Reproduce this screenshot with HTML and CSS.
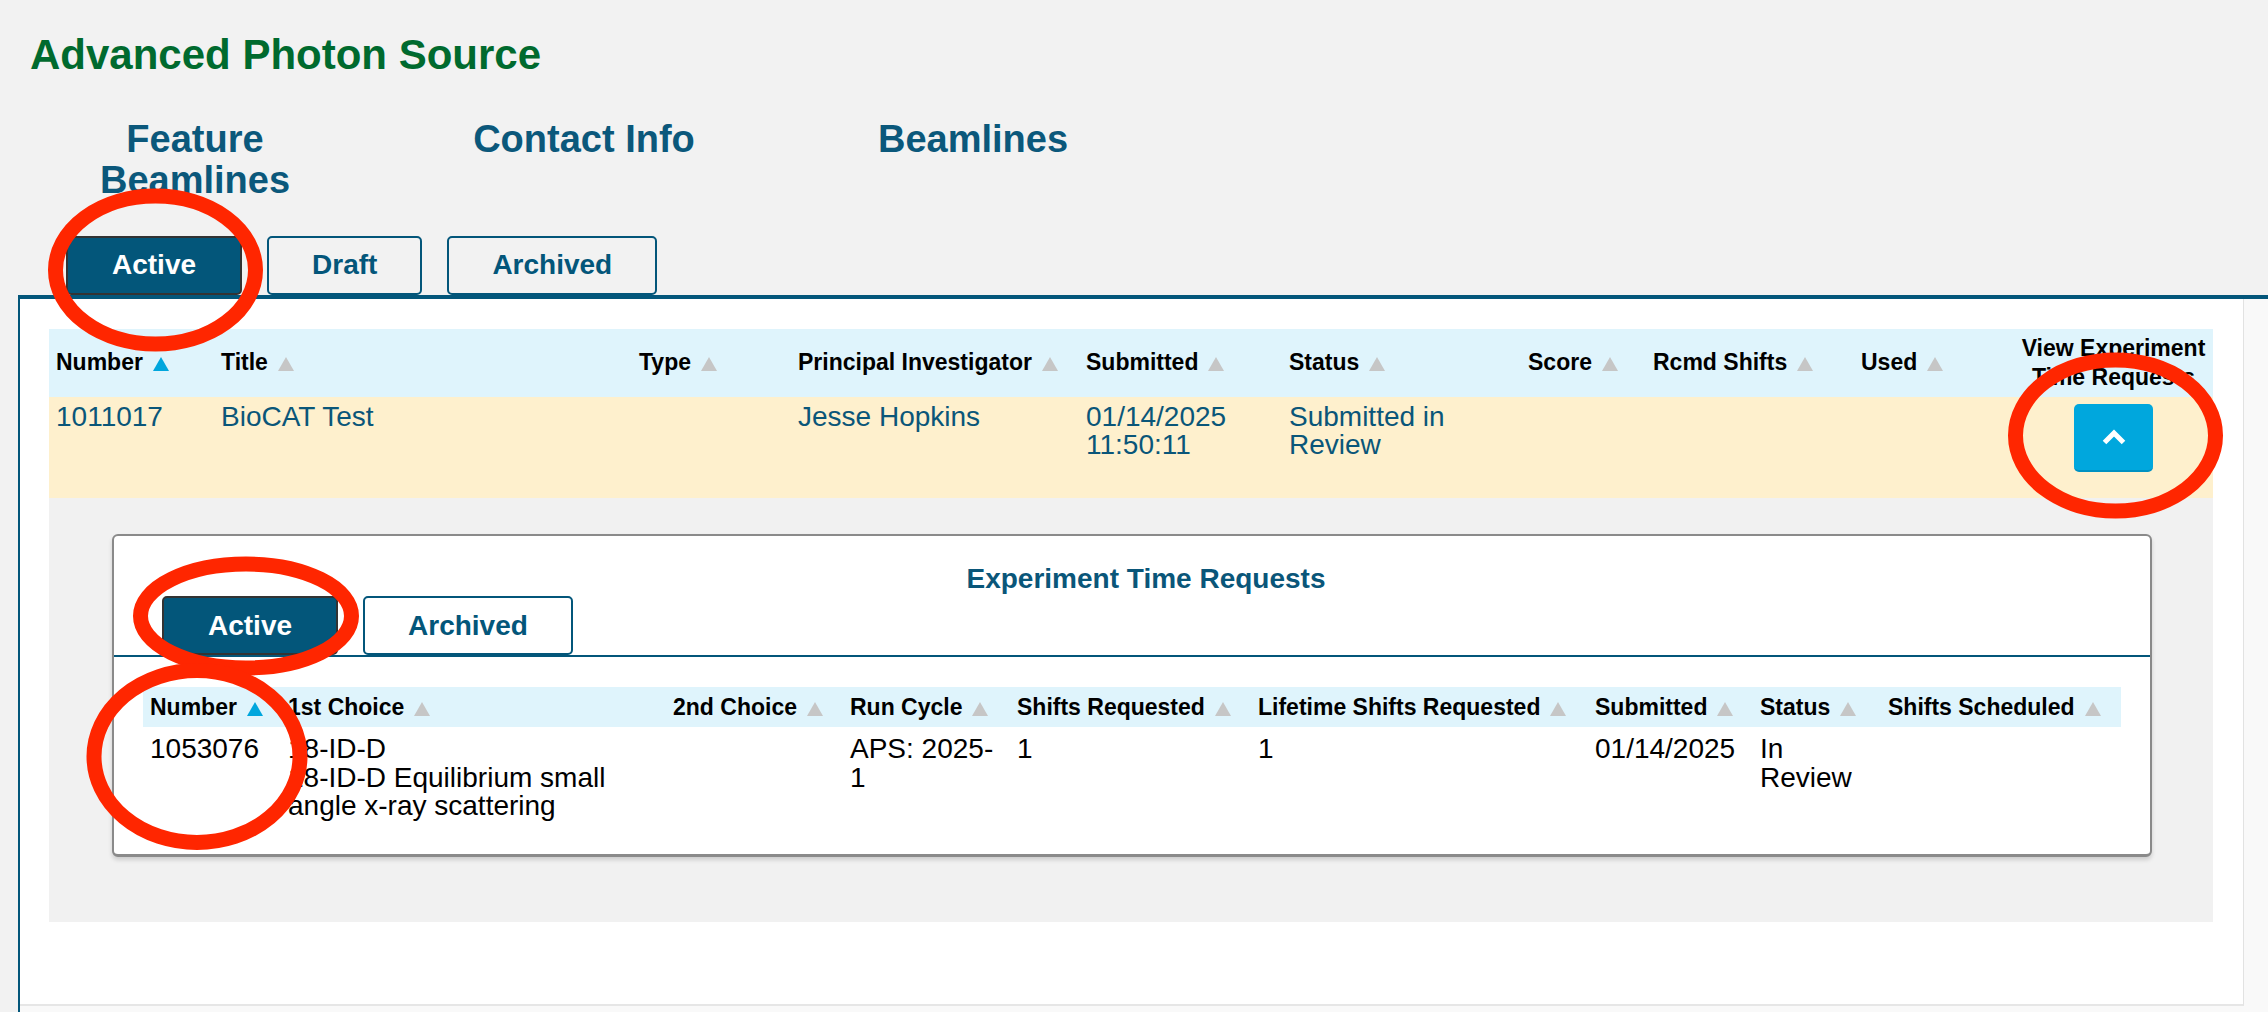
FILE: index.html
```html
<!DOCTYPE html>
<html lang="en">
<head>
<meta charset="utf-8">
<title>Advanced Photon Source</title>
<link rel="stylesheet" href="styles.css">
</head>
<body>
<h1 class="site-title">Advanced Photon Source</h1>
<nav class="nav">
  <a class="nav-link" href="#">Feature Beamlines</a>
  <a class="nav-link" href="#">Contact Info</a>
  <a class="nav-link" href="#">Beamlines</a>
</nav>
<div class="tabs tabs-outer">
  <div class="tab tab-active">Active</div>
  <div class="tab">Draft</div>
  <div class="tab">Archived</div>
</div>
<div class="workspace">
  <div class="panel">
    <table class="grid main-grid">
      <colgroup>
        <col style="width:165px"><col style="width:418px"><col style="width:159px"><col style="width:288px"><col style="width:203px"><col style="width:239px"><col style="width:125px"><col style="width:208px"><col style="width:160px"><col style="width:199px">
      </colgroup>
      <thead>
        <tr>
          <th>Number<span class="sort sort-on"></span></th>
          <th>Title<span class="sort"></span></th>
          <th>Type<span class="sort"></span></th>
          <th>Principal Investigator<span class="sort"></span></th>
          <th>Submitted<span class="sort"></span></th>
          <th>Status<span class="sort"></span></th>
          <th>Score<span class="sort"></span></th>
          <th>Rcmd Shifts<span class="sort"></span></th>
          <th>Used<span class="sort"></span></th>
          <th class="th-center">View Experiment<br>Time Requests</th>
        </tr>
      </thead>
      <tbody>
        <tr class="row-hl">
          <td>1011017</td>
          <td>BioCAT Test</td>
          <td></td>
          <td>Jesse Hopkins</td>
          <td>01/14/2025 11:50:11</td>
          <td>Submitted in Review</td>
          <td></td>
          <td></td>
          <td></td>
          <td class="td-button">
            <button class="toggle" type="button" aria-label="Collapse">
              <svg width="26" height="18" viewBox="0 0 26 18"><polyline points="3.5,14.5 13,5 22.5,14.5" fill="none" stroke="#fff" stroke-width="5"/></svg>
            </button>
          </td>
        </tr>
        <tr class="row-detail">
          <td colspan="10">
            <div class="card">
              <div class="card-title">Experiment Time Requests</div>
              <div class="tabs tabs-inner">
                <div class="tab tab-active">Active</div>
                <div class="tab">Archived</div>
              </div>
              <table class="grid sub-grid">
                <colgroup>
                  <col style="width:138px"><col style="width:385px"><col style="width:177px"><col style="width:167px"><col style="width:241px"><col style="width:337px"><col style="width:165px"><col style="width:128px"><col style="width:240px">
                </colgroup>
                <thead>
                  <tr>
                    <th>Number<span class="sort sort-on"></span></th>
                    <th>1st Choice<span class="sort"></span></th>
                    <th>2nd Choice<span class="sort"></span></th>
                    <th>Run Cycle<span class="sort"></span></th>
                    <th>Shifts Requested<span class="sort"></span></th>
                    <th>Lifetime Shifts Requested<span class="sort"></span></th>
                    <th>Submitted<span class="sort"></span></th>
                    <th>Status<span class="sort"></span></th>
                    <th>Shifts Scheduled<span class="sort"></span></th>
                  </tr>
                </thead>
                <tbody>
                  <tr>
                    <td>1053076</td>
                    <td><div class="clip">18-ID-D<br>18-ID-D Equilibrium small angle x-ray scattering (TFC&#8209;SAXS)</div></td>
                    <td></td>
                    <td>APS: 2025-1</td>
                    <td>1</td>
                    <td>1</td>
                    <td>01/14/2025</td>
                    <td>In Review</td>
                    <td></td>
                  </tr>
                </tbody>
              </table>
            </div>
          </td>
        </tr>
      </tbody>
    </table>
  </div>
</div>
<svg class="annotations" width="2268" height="1012" viewBox="0 0 2268 1012">
  <g fill="none" stroke="#ff2600" stroke-width="15">
    <ellipse cx="155.5" cy="270" rx="100" ry="74"/>
    <ellipse cx="2115.5" cy="435.5" rx="100" ry="75.5"/>
    <ellipse cx="246" cy="616" rx="105.5" ry="52"/>
    <ellipse cx="197" cy="756.5" rx="103" ry="86"/>
  </g>
</svg>
</body>
</html>
```
FILE: styles.css
```css
html, body {
  margin: 0;
  padding: 0;
}
body {
  position: relative;
  background: #f2f2f2;
  font-family: "Liberation Sans", Arial, Helvetica, sans-serif;
  width: 2268px;
  height: 1012px;
  overflow: hidden;
}
.site-title {
  margin: 0;
  padding: 31px 0 0 30px;
  font-size: 42px;
  line-height: 48px;
  font-weight: bold;
  color: #006a2e;
}
.nav {
  display: flex;
  gap: 99px;
  margin-top: 40px;
  padding-left: 50px;
}
.nav-link {
  width: 290px;
  text-align: center;
  font-size: 38px;
  line-height: 41px;
  font-weight: bold;
  color: #0b587b;
  text-decoration: none;
}
.tabs {
  display: flex;
  gap: 25px;
  align-items: flex-end;
}
.tabs-outer {
  margin-top: 34.5px;
  padding-left: 66px;
}
.tab {
  box-sizing: border-box;
  height: 59px;
  padding: 0 43px;
  display: flex;
  align-items: center;
  border: 2px solid #03567a;
  border-radius: 5px;
  font-size: 28px;
  font-weight: bold;
  color: #03567a;
}
.tab-active {
  background: #03567a;
  border-color: #333;
  color: #fff;
  padding: 0 44px;
}
.workspace {
  margin-left: 18px;
  border-top: 4px solid #03567a;
  border-left: 2px solid #03567a;
  background: #f9f9f9;
  height: 718px;
}
.panel {
  box-sizing: border-box;
  width: 2224px;
  height: 707px;
  background: #fff;
  border-right: 1px solid #e2e2e2;
  border-bottom: 2px solid #e6e6e6;
  padding: 30px 0 0 29px;
}
.grid {
  border-collapse: collapse;
  table-layout: fixed;
  border-spacing: 0;
}
.main-grid {
  width: 2164px;
}
.grid th {
  text-align: left;
  font-size: 23px;
  font-weight: bold;
  color: #000;
  line-height: 28.5px;
  white-space: nowrap;
  vertical-align: middle;
  padding: 0 7px;
}
.main-grid > thead > tr > th {
  background: #dff4fc;
  height: 68px;
}
.th-center {
  text-align: center !important;
  padding: 0 2px !important;
}
.sort {
  display: inline-block;
  width: 0;
  height: 0;
  margin-left: 10px;
  border-left: 8px solid transparent;
  border-right: 8px solid transparent;
  border-bottom: 14px solid #c6c6c6;
  vertical-align: baseline;
  position: relative;
  top: 1px;
}
.sort-on {
  border-bottom-color: #00a6dd;
}
.row-hl > td {
  background: #fef0cd;
  vertical-align: top;
  padding: 6px 7px 0;
  font-size: 28px;
  line-height: 28.5px;
  color: #0a5679;
}
.row-hl > td.td-button {
  text-align: center;
  padding: 7px 0 26px;
}
.toggle {
  box-sizing: border-box;
  width: 79px;
  height: 68px;
  border: none;
  border-bottom: 2px solid #0091c2;
  border-radius: 5px;
  background: #00a7dd;
  padding: 0;
  display: inline-flex;
  align-items: center;
  justify-content: center;
  vertical-align: top;
}
.row-detail > td {
  background: #f1f1f1;
  padding: 36px 61px 65px 63px;
}
.card {
  box-sizing: border-box;
  width: 2040px;
  background: #fff;
  border: 2px solid #8a8a8a;
  border-bottom-width: 3px;
  border-radius: 6px;
  box-shadow: 0 3px 4px rgba(0, 0, 0, 0.15);
  padding: 29px 0 30px;
}
.card-title {
  text-align: center;
  padding-left: 28px;
  font-size: 28px;
  line-height: 28.5px;
  font-weight: bold;
  color: #0a5679;
}
.tabs-inner {
  margin-top: 3px;
  padding-left: 48px;
  border-bottom: 2px solid #03567a;
}
.sub-grid {
  width: 1978px;
  margin: 30px 29px 0;
}
.sub-grid th {
  background: #dff4fc;
  height: 40px;
}
.sub-grid td {
  vertical-align: top;
  padding: 8px 7px 0;
  font-size: 28px;
  line-height: 28.5px;
  color: #000;
}
.clip {
  max-height: 89px;
  overflow: hidden;
}
.annotations {
  position: absolute;
  top: 0;
  left: 0;
  pointer-events: none;
}
```
